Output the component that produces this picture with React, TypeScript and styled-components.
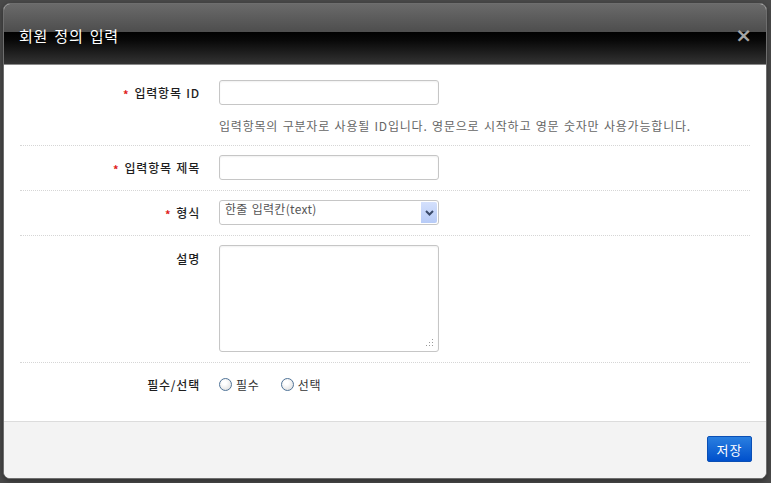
import styled, { createGlobalStyle } from "styled-components";

const GlobalStyle = createGlobalStyle`
  html, body {
    margin: 0;
    padding: 0;
    background: #4a4a4a;
    font-family: "Noto Sans CJK KR", "Noto Sans", "Liberation Sans", sans-serif;
    font-size: 12px;
  }
  * {
    box-sizing: border-box;
  }
`;

const fields = [
  { label: "입력항목 ID", required: true, kind: "input", help: "입력항목의 구분자로 사용될 ID입니다. 영문으로 시작하고 영문 숫자만 사용가능합니다." },
  { label: "입력항목 제목", required: true, kind: "input" },
  { label: "형식", required: true, kind: "select" },
  { label: "설명", required: false, kind: "textarea" },
  { label: "필수/선택", required: false, kind: "radio" },
];

const App = () => {
  return (
    <>
      <GlobalStyle />
      <Page>
        <Dialog>
          <Header>
            <Title>회원 정의 입력</Title>
            <Close>×</Close>
          </Header>
          <Body>
            {fields.map((f, i) => (
              <FieldRow key={f.label} $last={i === fields.length - 1}>
                <Label $center={f.kind !== "textarea"}>
                  {f.required && <Star>*</Star>}
                  {f.label}
                </Label>
                <Control>
                  {f.kind === "input" && <TextInput />}
                  {f.kind === "select" && (
                    <Select>
                      <SelectText>한줄 입력칸(text)</SelectText>
                      <SelectArrow>
                        <svg width="9" height="6" viewBox="0 0 9 6">
                          <path d="M1 1 L4.5 4.5 L8 1" fill="none" stroke="#3a4a6a" strokeWidth="2" />
                        </svg>
                      </SelectArrow>
                    </Select>
                  )}
                  {f.kind === "textarea" && (
                    <TextArea>
                      <Grip>
                        <svg width="8" height="8" viewBox="0 0 8 8">
                          <rect x="6" y="0" width="1" height="1" fill="#999" />
                          <rect x="3" y="3" width="1" height="1" fill="#999" />
                          <rect x="6" y="3" width="1" height="1" fill="#999" />
                          <rect x="0" y="6" width="1" height="1" fill="#999" />
                          <rect x="3" y="6" width="1" height="1" fill="#999" />
                          <rect x="6" y="6" width="1" height="1" fill="#999" />
                        </svg>
                      </Grip>
                    </TextArea>
                  )}
                  {f.kind === "radio" && (
                    <RadioGroup>
                      <RadioItem>
                        <Radio />
                        필수
                      </RadioItem>
                      <RadioItem>
                        <Radio />
                        선택
                      </RadioItem>
                    </RadioGroup>
                  )}
                  {f.help && <Help>{f.help}</Help>}
                </Control>
              </FieldRow>
            ))}
          </Body>
          <Footer>
            <SaveButton>저장</SaveButton>
          </Footer>
        </Dialog>
      </Page>
    </>
  );
};

const Page = styled.div`
  width: 771px;
  height: 483px;
  padding: 3px 4px 4px 3px;
  overflow: hidden;
`;

const Dialog = styled.div`
  width: 764px;
  height: 476px;
  display: flex;
  flex-direction: column;
  border: 1px solid #6e6e6e;
  border-radius: 7px;
  overflow: hidden;
  background: #fff;
  box-shadow: 0 2px 6px rgba(0, 0, 0, 0.4);
`;

const Header = styled.div`
  height: 61px;
  flex-shrink: 0;
  display: flex;
  align-items: center;
  justify-content: space-between;
  padding: 0 14px 0 15px;
  background: linear-gradient(
    to bottom,
    #6a6a6a 0%,
    #4e4e4e 46%,
    #000 46%,
    #080808 60%,
    #333 100%
  );
  border-bottom: 1px solid #8a8a8a;
`;

const Title = styled.h1`
  margin: 0;
  padding-top: 2px;
  font-size: 15px;
  font-weight: normal;
  letter-spacing: 0.8px;
  word-spacing: 2px;
  color: #fff;
`;

const Close = styled.span`
  font-family: "DejaVu Sans", sans-serif;
  font-size: 20px;
  font-weight: bold;
  line-height: 1;
  color: #a5a5a5;
  padding-top: 1px;
`;

const Body = styled.div`
  flex: 1;
  padding: 6px 16px 0 16px;
  background: #fff;
  letter-spacing: 0.8px;
  word-spacing: 1px;
`;

const FieldRow = styled.div<{ $last?: boolean }>`
  display: flex;
  gap: 19px;
  padding: 9px 0 10px 0;
  border-bottom: ${(p) => (p.$last ? "none" : "1px dotted #d6d6d6")};
`;

const Label = styled.div<{ $center?: boolean }>`
  width: 180px;
  flex-shrink: 0;
  display: flex;
  align-items: center;
  justify-content: flex-end;
  height: ${(p) => (p.$center ? "25px" : "26px")};
  color: #1e1e1e;
  font-size: 12px;
  font-weight: 500;
`;

const Star = styled.span`
  color: #e0201a;
  font-size: 11px;
  font-weight: bold;
  margin-right: 5px;
  position: relative;
  top: 1px;
`;

const Control = styled.div`
  display: flex;
  flex-direction: column;
`;

const fieldBox = `
  width: 220px;
  border: 1px solid #c6c6c6;
  border-radius: 3px;
  background: #fff;
  box-shadow: inset 0 1px 2px rgba(0, 0, 0, 0.06);
`;

const TextInput = styled.div`
  ${fieldBox}
  height: 25px;
`;

const Select = styled.div`
  ${fieldBox}
  height: 25px;
  display: flex;
  align-items: center;
  justify-content: space-between;
  padding: 1px 1px 1px 5px;
  box-shadow: none;
  letter-spacing: 0.3px;
`;

const SelectText = styled.span`
  color: #555;
  font-size: 12px;
  margin-top: -8px;
`;

const SelectArrow = styled.div`
  width: 16px;
  height: 100%;
  display: flex;
  align-items: center;
  justify-content: center;
  background: linear-gradient(to bottom, #d4e0fc, #b7cbf7);
  border-radius: 0 2px 2px 0;
`;

const TextArea = styled.div`
  ${fieldBox}
  height: 107px;
  display: flex;
  align-items: flex-end;
  justify-content: flex-end;
  padding: 0 4px 4px 0;
`;

const Grip = styled.div`
  display: flex;
`;

const Help = styled.div`
  margin-top: 12px;
  line-height: 18px;
  color: #666;
  font-size: 12px;
  white-space: nowrap;
`;

const RadioGroup = styled.div`
  height: 25px;
  display: flex;
  align-items: center;
  gap: 21px;
`;

const RadioItem = styled.label`
  display: flex;
  align-items: center;
  gap: 4px;
  color: #333;
  font-size: 12px;
`;

const Radio = styled.span`
  width: 13px;
  height: 13px;
  border-radius: 50%;
  border: 1px solid #4f7397;
  background: radial-gradient(circle at 40% 35%, #fff 20%, #d8d8d8 100%);
  display: inline-block;
`;

const Footer = styled.div`
  height: 57px;
  flex-shrink: 0;
  display: flex;
  align-items: center;
  justify-content: flex-end;
  padding: 0 14px 2px 0;
  background: #f3f3f3;
  border-top: 1px solid #dcdcdc;
`;

const SaveButton = styled.button`
  width: 45px;
  height: 26px;
  border: 1px solid #0a4fb5;
  border-radius: 2px;
  background: linear-gradient(to bottom, #2a7fe0, #0050cc);
  color: #fff;
  font-family: "Noto Sans CJK KR", sans-serif;
  font-size: 13px;
  letter-spacing: 1px;
  padding: 0;
`;

export default App;
